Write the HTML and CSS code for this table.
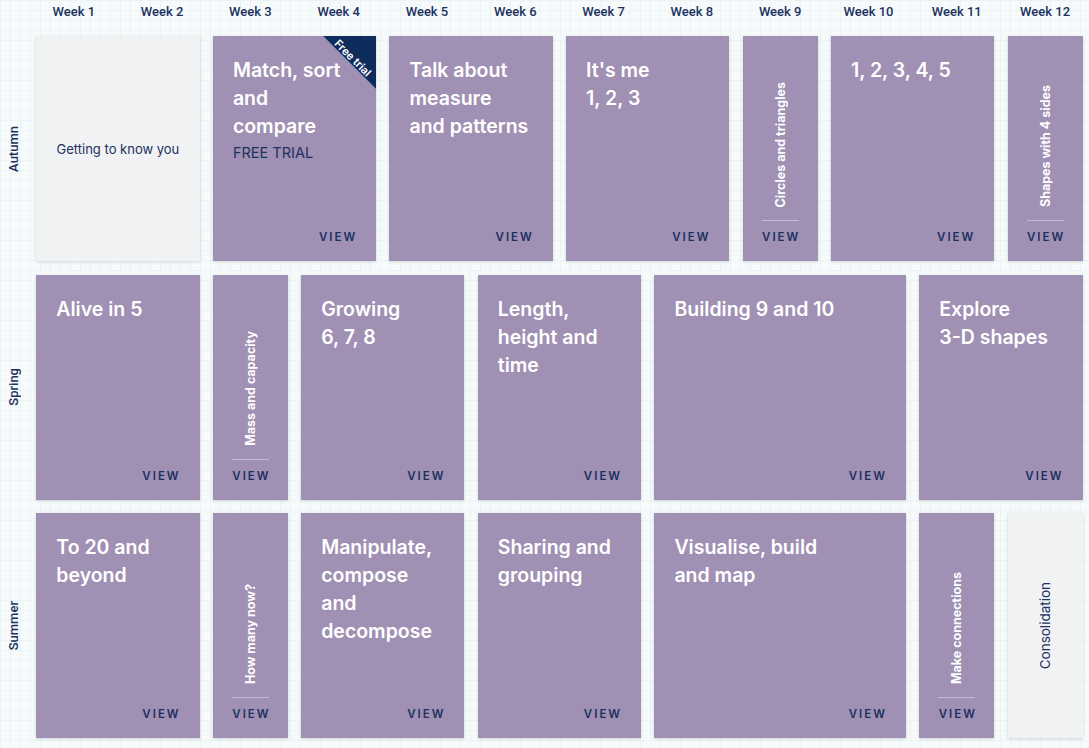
FILE: index.html
```html
<!DOCTYPE html>
<html lang="en">
<head>
<meta charset="utf-8">
<title>Scheme of learning</title>
<link rel="stylesheet" href="styles.css">
</head>
<body>
<div class="board">
  <div class="corner"></div>
  <div class="wk">Week 1</div>
  <div class="wk">Week 2</div>
  <div class="wk">Week 3</div>
  <div class="wk">Week 4</div>
  <div class="wk">Week 5</div>
  <div class="wk">Week 6</div>
  <div class="wk">Week 7</div>
  <div class="wk">Week 8</div>
  <div class="wk">Week 9</div>
  <div class="wk">Week 10</div>
  <div class="wk">Week 11</div>
  <div class="wk">Week 12</div>

  <div class="season"><span>Autumn</span></div>
  <div class="card grey span2"><span class="plain">Getting to know you</span></div>
  <div class="card span2 trial">
    <div class="ribbon"></div><span class="ribbon-text">Free trial</span>
    <div class="title">Match, sort<br>and<br>compare</div>
    <div class="free">FREE TRIAL</div>
    <div class="view">VIEW</div>
  </div>
  <div class="card span2">
    <div class="title">Talk about<br>measure<br>and patterns</div>
    <div class="view">VIEW</div>
  </div>
  <div class="card span2">
    <div class="title">It's me<br>1, 2, 3</div>
    <div class="view">VIEW</div>
  </div>
  <div class="card narrow">
    <div class="vwrap"><span class="vtext">Circles and triangles</span></div>
    <div class="rule"></div>
    <div class="view">VIEW</div>
  </div>
  <div class="card span2">
    <div class="title">1, 2, 3, 4, 5</div>
    <div class="view">VIEW</div>
  </div>
  <div class="card narrow">
    <div class="vwrap"><span class="vtext">Shapes with 4 sides</span></div>
    <div class="rule"></div>
    <div class="view">VIEW</div>
  </div>

  <div class="season"><span>Spring</span></div>
  <div class="card span2">
    <div class="title">Alive in 5</div>
    <div class="view">VIEW</div>
  </div>
  <div class="card narrow">
    <div class="vwrap"><span class="vtext">Mass and capacity</span></div>
    <div class="rule"></div>
    <div class="view">VIEW</div>
  </div>
  <div class="card span2">
    <div class="title">Growing<br>6, 7, 8</div>
    <div class="view">VIEW</div>
  </div>
  <div class="card span2">
    <div class="title">Length,<br>height and<br>time</div>
    <div class="view">VIEW</div>
  </div>
  <div class="card span3">
    <div class="title">Building 9 and 10</div>
    <div class="view">VIEW</div>
  </div>
  <div class="card span2">
    <div class="title">Explore<br>3-D shapes</div>
    <div class="view">VIEW</div>
  </div>

  <div class="season"><span>Summer</span></div>
  <div class="card span2">
    <div class="title">To 20 and<br>beyond</div>
    <div class="view">VIEW</div>
  </div>
  <div class="card narrow">
    <div class="vwrap"><span class="vtext">How many now?</span></div>
    <div class="rule"></div>
    <div class="view">VIEW</div>
  </div>
  <div class="card span2">
    <div class="title">Manipulate,<br>compose<br>and<br>decompose</div>
    <div class="view">VIEW</div>
  </div>
  <div class="card span2">
    <div class="title">Sharing and<br>grouping</div>
    <div class="view">VIEW</div>
  </div>
  <div class="card span3">
    <div class="title">Visualise, build<br>and map</div>
    <div class="view">VIEW</div>
  </div>
  <div class="card narrow">
    <div class="vwrap"><span class="vtext">Make connections</span></div>
    <div class="rule"></div>
    <div class="view">VIEW</div>
  </div>
  <div class="card grey"><span class="plain vplain">Consolidation</span></div>
</div>
</body>
</html>
```
FILE: styles.css
```css
html, body {
  margin: 0;
  padding: 0;
}
body {
  width: 1089px;
  height: 748px;
  overflow: hidden;
  background-color: #f6fafa;
  background-image:
    linear-gradient(to right, #ebf4f4 1px, transparent 1px),
    linear-gradient(to bottom, #ebf4f4 1px, transparent 1px);
  background-size: 10px 10px;
  font-family: "Roboto", "Liberation Sans", sans-serif;
  color: #1c3160;
}
.board {
  display: grid;
  grid-template-columns: 23px repeat(12, 75px);
  grid-template-rows: 22.5px repeat(3, 225px);
  column-gap: 13.3px;
  row-gap: 13.5px;
}
.wk {
  font-size: 13px;
  font-weight: 500;
  text-align: center;
  line-height: 24px;
  white-space: nowrap;
  color: #1c3160;
}
.season {
  display: flex;
  align-items: center;
  justify-content: center;
  padding-left: 4px;
}
.season span {
  writing-mode: vertical-rl;
  transform: rotate(180deg);
  font-size: 13px;
  font-weight: 500;
  color: #1c3160;
}
.card {
  position: relative;
  background: #a090b4;
  box-shadow: 0 1px 3px rgba(40, 50, 70, 0.18);
  display: flex;
  flex-direction: column;
  padding: 20px 20px 17px;
  box-sizing: border-box;
  overflow: hidden;
}
.span2 { grid-column: span 2; }
.span3 { grid-column: span 3; }
.grey {
  background: #f1f2f4;
  align-items: center;
  justify-content: center;
  padding: 0;
}
.plain {
  font-family: "Inter", "Liberation Sans", sans-serif;
  font-size: 13px;
  color: #1c3160;
}
.vplain {
  writing-mode: vertical-rl;
  transform: rotate(180deg);
  font-size: 13.5px;
}
.title {
  font-family: "Inter", "Liberation Sans", sans-serif;
  font-weight: 600;
  font-size: 19.5px;
  line-height: 28px;
  color: #ffffff;
}
.free {
  font-family: "Inter", "Liberation Sans", sans-serif;
  font-size: 14.5px;
  line-height: 26px;
  color: #1c3160;
}
.view {
  margin-top: auto;
  align-self: flex-end;
  font-family: "Inter", "Liberation Sans", sans-serif;
  font-weight: 600;
  font-size: 11.5px;
  letter-spacing: 2px;
  margin-right: -1px;
  line-height: 14px;
  color: #1c3160;
}
.narrow {
  padding: 18px 0 17px;
  align-items: center;
}
.narrow .view {
  align-self: center;
  margin-top: 9px;
  margin-right: -2px;
}
.vwrap {
  flex: 1;
  display: flex;
  align-items: flex-end;
  justify-content: center;
}
.vtext {
  writing-mode: vertical-rl;
  transform: rotate(180deg);
  font-family: "Inter", "Liberation Sans", sans-serif;
  font-weight: 700;
  font-size: 12.5px;
  color: #ffffff;
  white-space: nowrap;
}
.rule {
  width: 37px;
  height: 1px;
  background: #c3b9d0;
  margin-top: 13px;
}
.ribbon {
  position: absolute;
  top: 0;
  right: 0;
  width: 53px;
  height: 53px;
  background: #0e2c5c;
  clip-path: polygon(0 0, 100% 0, 100% 100%);
}
.ribbon-text {
  position: absolute;
  top: 15px;
  right: -4px;
  width: 54px;
  text-align: center;
  transform: rotate(45deg);
  transform-origin: center;
  font-family: "Inter", "Liberation Sans", sans-serif;
  font-size: 11px;
  font-weight: 600;
  color: #ffffff;
  white-space: nowrap;
}
```
